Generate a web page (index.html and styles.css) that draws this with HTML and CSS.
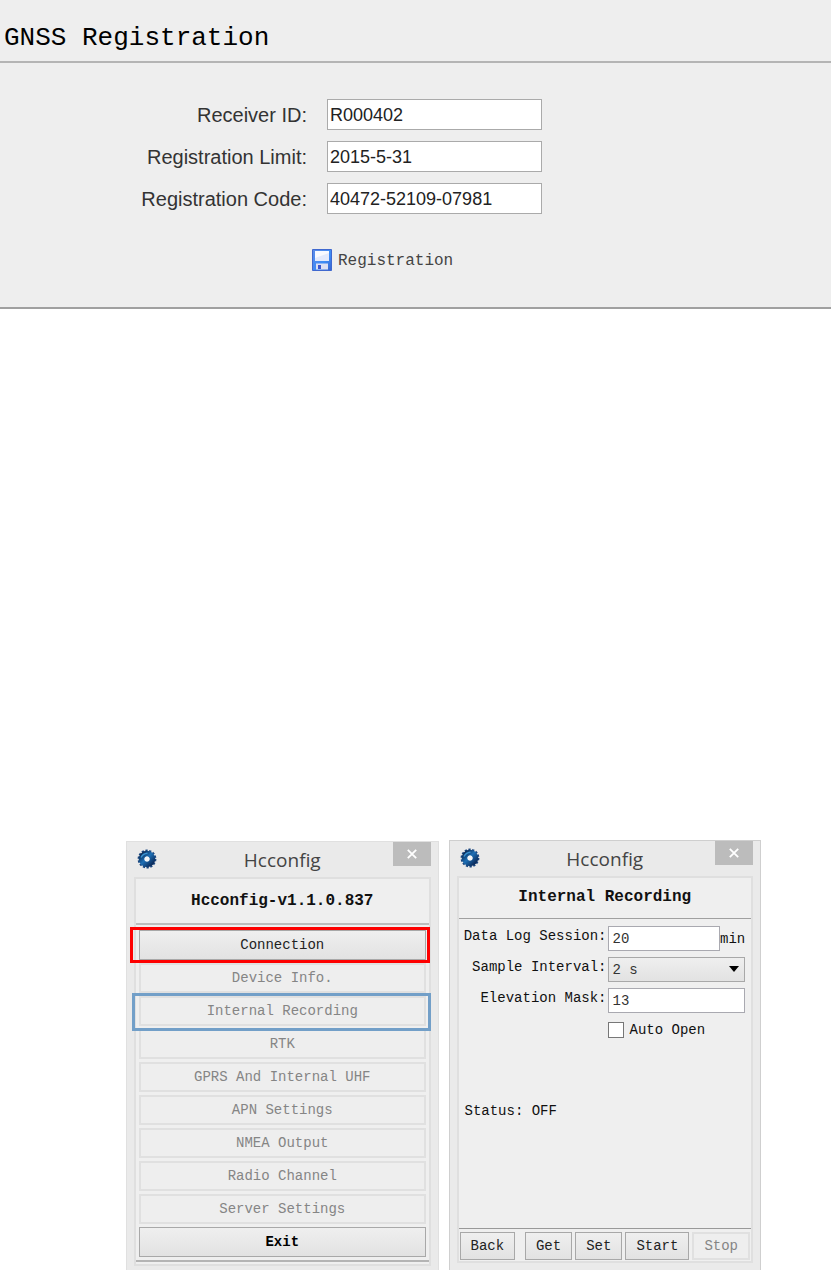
FILE: index.html
```html
<!DOCTYPE html>
<html lang="en">
<head>
<meta charset="utf-8">
<title>GNSS Registration</title>
<link rel="stylesheet" href="styles.css">
</head>
<body>
<svg class="defs" width="0" height="0" aria-hidden="true">
  <defs>
    <linearGradient id="gearFill" x1="0" y1="0" x2="1" y2="1">
      <stop offset="0" stop-color="#0d2f5c"/>
      <stop offset="0.45" stop-color="#1d6fb5"/>
      <stop offset="1" stop-color="#0b2a5a"/>
    </linearGradient>
    <symbol id="gear" viewBox="0 0 20 20">
      <circle cx="10" cy="10" r="8.2" fill="none" stroke="#1a467f" stroke-width="2.4" stroke-dasharray="2.2 1.48"/>
      <circle cx="10" cy="10" r="5.4" fill="none" stroke="url(#gearFill)" stroke-width="5.8"/>
      <path d="M4 8.5Q6 4.500 10.500 4.200" fill="none" stroke="#3a93d2" stroke-width="1.500"/>
      <circle cx="10" cy="10" r="2.500" fill="#f4f6f8"/>
    </symbol>
    <linearGradient id="diskFill" x1="0" y1="0" x2="1" y2="1">
      <stop offset="0" stop-color="#5d8be8"/>
      <stop offset="0.6" stop-color="#3d8cf5"/>
      <stop offset="1" stop-color="#3a62cc"/>
    </linearGradient>
  </defs>
</svg>

<section class="registration">
  <h1 class="registration-title">GNSS Registration</h1>
  <form class="registration-form">
    <label for="receiver">Receiver ID:</label>
    <input id="receiver" type="text" value="R000402">
    <label for="limit">Registration Limit:</label>
    <input id="limit" type="text" value="2015-5-31">
    <label for="code">Registration Code:</label>
    <input id="code" type="text" value="40472-52109-07981">
    <button class="register" type="button">
      <svg width="20" height="22" viewBox="0 0 20 22" aria-hidden="true">
        <path d="M.5 .5H19.500V21.500H.5Z" fill="url(#diskFill)" stroke="#3f68cf"/>
        <path d="M3 2H17V12H3Z" fill="#e3eafc"/>
        <path d="M3 2H17V4L3 9Z" fill="#f8faff"/>
        <path d="M4 14.500H16V20.500H4Z" fill="#dde0f2"/>
        <path d="M6 16H9V20H6Z" fill="#3b55cf"/>
      </svg>
      <span>Registration</span>
    </button>
  </form>
</section>

<main class="windows">
  <section class="window window-menu">
    <header class="titlebar">
      <svg class="gear" width="20" height="20" aria-hidden="true"><use href="#gear"/></svg>
      <span class="titlebar-text">Hcconfig</span>
      <button class="close" type="button" aria-label="Close"><svg width="10" height="10" viewBox="0 0 10 10"><path d="M.8 .8L9.200 9.200M9.200 .8L.8 9.200" stroke="#fff" stroke-width="1.800"/></svg></button>
    </header>
    <div class="panel">
      <h2 class="panel-title">Hcconfig-v1.1.0.837</h2>
      <nav class="menu">
        <div class="item marked-red"><button class="btn" type="button">Connection</button></div>
        <div class="item"><button class="btn" type="button" disabled>Device Info.</button></div>
        <div class="item marked-blue"><button class="btn" type="button" disabled>Internal Recording</button></div>
        <div class="item"><button class="btn" type="button" disabled>RTK</button></div>
        <div class="item"><button class="btn" type="button" disabled>GPRS And Internal UHF</button></div>
        <div class="item"><button class="btn" type="button" disabled>APN Settings</button></div>
        <div class="item"><button class="btn" type="button" disabled>NMEA Output</button></div>
        <div class="item"><button class="btn" type="button" disabled>Radio Channel</button></div>
        <div class="item"><button class="btn" type="button" disabled>Server Settings</button></div>
        <div class="item"><button class="btn btn-exit" type="button">Exit</button></div>
      </nav>
    </div>
  </section>

  <section class="window">
    <header class="titlebar">
      <svg class="gear" width="20" height="20" aria-hidden="true"><use href="#gear"/></svg>
      <span class="titlebar-text">Hcconfig</span>
      <button class="close" type="button" aria-label="Close"><svg width="10" height="10" viewBox="0 0 10 10"><path d="M.8 .8L9.200 9.200M9.200 .8L.8 9.200" stroke="#fff" stroke-width="1.800"/></svg></button>
    </header>
    <div class="panel">
      <h2 class="panel-title panel-title-short">Internal Recording</h2>
      <form class="recording">
        <div class="fields">
          <label for="session">Data Log Session:</label>
          <div class="with-unit"><input id="session" type="text" value="20"><span>min</span></div>
          <label for="interval">Sample Interval:</label>
          <div class="select">
            <select id="interval"><option>2 s</option></select>
            <svg class="arrow" width="10" height="6" viewBox="0 0 10 6" aria-hidden="true"><path d="M0 0H10L5 6Z"/></svg>
          </div>
          <label for="mask">Elevation Mask:</label>
          <input id="mask" type="text" value="13">
          <label class="check"><input type="checkbox">Auto Open</label>
        </div>
        <p class="status">Status: OFF</p>
        <div class="actions">
          <button class="btn back" type="button">Back</button>
          <button class="btn" type="button">Get</button>
          <button class="btn" type="button">Set</button>
          <button class="btn" type="button">Start</button>
          <button class="btn" type="button" disabled>Stop</button>
        </div>
      </form>
    </div>
  </section>
</main>
</body>
</html>
```
FILE: styles.css
```css
* {
  box-sizing: border-box;
}

body {
  margin: 0;
  background: #fff;
  color: #111;
  font: 14px/20px "Liberation Mono", monospace;
}

button,
input,
select {
  margin: 0;
  border-radius: 0;
  color: inherit;
  font: inherit;
}

h1,
h2,
p {
  margin: 0;
}

.defs {
  position: absolute;
}

/* Registration form */
.registration {
  background: #eee;
  border-bottom: 2px solid #a0a0a0;
}

.registration-title {
  padding: 22px 4px 7px;
  border-bottom: 2px solid #b4b4b4;
  color: #000;
  font-size: 26px;
  font-weight: 400;
  line-height: 32px;
}

.registration-form {
  display: grid;
  grid-template-columns: 307px 215px;
  column-gap: 20px;
  row-gap: 11px;
  align-items: center;
  padding: 36px 0 33px;
}

.registration-form label {
  color: #333;
  font: 20px/24px "Liberation Sans", Arial, sans-serif;
  text-align: right;
}

.registration-form input {
  width: 100%;
  height: 31px;
  padding: 1px 2px 0;
  border: 1px solid #aaa;
  background: #fff;
  color: #222;
  font: 18px/24px "Liberation Sans", Arial, sans-serif;
}

.register {
  display: flex;
  grid-column: 1 / -1;
  gap: 6px;
  align-items: center;
  justify-self: start;
  margin: 20px 0 0 312px;
  padding: 0;
  border: 0;
  background: none;
  color: #444;
  font-size: 16px;
  line-height: 25px;
}

.register span {
  padding-top: 4px;
}

/* Application windows */
.windows {
  display: grid;
  grid-template-columns: 1fr 1fr;
  gap: 10px;
  margin-top: 531px;
  padding: 0 70px 0 126px;
}

.window {
  display: flex;
  flex-direction: column;
  padding: 0 7px 7px;
  border: 1px solid #cfcfcf;
  background: #eaeaea;
}

.window-menu {
  margin-top: 1px;
  padding-bottom: 5px;
  border-color: #e0e0e0;
  border-bottom: 0;
}

.titlebar {
  display: grid;
  grid-template-columns: 38px 1fr 38px;
  align-items: start;
  height: 35px;
}

.gear {
  margin: 7px 0 0 3px;
}

.titlebar-text {
  padding-top: 4px;
  color: #444;
  font: 19px/28px "Open Sans", sans-serif;
  text-align: center;
}

.close {
  display: grid;
  place-items: center;
  height: 24px;
  padding: 0;
  border: 0;
  background: #bcbcbc;
}

.panel {
  display: flex;
  flex: 1;
  flex-direction: column;
  border: 2px solid #dfdfdf;
  background: #efefef;
}

.panel-title {
  padding: 12px 0;
  border-bottom: 2px solid #bdbdbd;
  color: #111;
  font-size: 16px;
  line-height: 20px;
  text-align: center;
}

.panel-title-short {
  padding: 9px 0 11px;
  border-bottom: 1px solid #a0a0a0;
}

.btn {
  height: 30px;
  padding: 0;
  border: 1px solid #a8a8a8;
  background: linear-gradient(#efefef, #e2e2e2);
  color: #222;
}

.btn:disabled {
  border: 2px solid #e0e0e0;
  background: #eee;
  color: #858585;
}

.menu {
  display: grid;
  gap: 3px;
  margin-bottom: 2px;
  padding: 5px 3px 3px;
  border-bottom: 2px solid #b4b4b4;
}

.item {
  position: relative;
  display: grid;
}

.btn-exit {
  color: #000;
  font-weight: 700;
}

.marked-red::after,
.marked-blue::after {
  position: absolute;
  z-index: 1;
  content: "";
  pointer-events: none;
}

.marked-red::after {
  inset: -3px -4px -3px -9px;
  border: 3px solid #fe0000;
}

.marked-blue::after {
  inset: -3px -5px -5px -7px;
  border: 3px solid #729fc8;
}

/* Recording settings */
.recording {
  display: flex;
  flex: 1;
  flex-direction: column;
}

.fields {
  display: grid;
  grid-template-columns: 148px 1fr;
  column-gap: 1px;
  row-gap: 6px;
  padding: 7px 6px 0 0;
}

.fields > label {
  text-align: right;
}

.fields input[type="text"],
.fields select {
  width: 100%;
  min-width: 0;
  height: 25px;
  padding: 0 4px;
  border: 1px solid #a9a9b0;
  background: #fff;
  color: #333;
}

.with-unit {
  display: grid;
  grid-template-columns: 1fr 25px;
  align-items: center;
}

.select {
  position: relative;
}

.fields select {
  display: block;
  appearance: none;
  border-color: #a8a8a8;
  background: linear-gradient(#efefef, #e2e2e2);
}

.arrow {
  position: absolute;
  top: 9px;
  right: 6px;
  pointer-events: none;
}

.fields .check {
  display: flex;
  grid-column: 2;
  gap: 6px;
  align-items: center;
  padding-top: 1px;
}

.check input {
  appearance: none;
  width: 16px;
  height: 16px;
  border: 1px solid #777;
  background: #fff;
}

.status {
  flex: 1;
  padding: 61px 6px 0;
}

.actions {
  display: flex;
  gap: 3px;
  padding: 3px 1px 1px;
  border-top: 1px solid #999;
}

.actions .btn {
  height: 28px;
  padding: 0 10px;
}

.actions .back {
  margin-right: auto;
}
```
